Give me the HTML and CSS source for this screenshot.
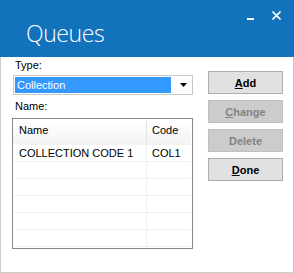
FILE: index.html
```html
<!DOCTYPE html>
<html lang="en">
<head>
    <meta charset="UTF-8">
    <title>Queues</title>
    <link rel="stylesheet" href="styles.css">
</head>
<body>
    <div class="window">
        <div class="titlebar">
            <span class="title">Queues</span>
            <div class="controls">
                <span class="minimize"></span>
                <svg class="close" width="9" height="9" viewBox="0 0 9 9">
                    <path d="M0.5 0.5 L8.5 8.5 M8.5 0.5 L0.5 8.5" stroke="#fff" stroke-width="1.6"/>
                </svg>
            </div>
        </div>
        <div class="content">
            <div class="left">
                <label class="label">Type:</label>
                <div class="combo">
                    <div class="combo-value">Collection</div>
                    <svg class="combo-arrow" width="7" height="4" viewBox="0 0 7 4">
                        <path d="M0 0 H7 L3.5 4 Z" fill="#000"/>
                    </svg>
                </div>
                <label class="label name-label">Name:</label>
                <div class="list">
                    <div class="row header">
                        <div class="cell name">Name</div>
                        <div class="cell code">Code</div>
                    </div>
                    <div class="row">
                        <div class="cell name">COLLECTION CODE 1</div>
                        <div class="cell code">COL1</div>
                    </div>
                    <div class="row"><div class="cell name"></div><div class="cell code"></div></div>
                    <div class="row"><div class="cell name"></div><div class="cell code"></div></div>
                    <div class="row"><div class="cell name"></div><div class="cell code"></div></div>
                    <div class="row"><div class="cell name"></div><div class="cell code"></div></div>
                    <div class="row"><div class="cell name"></div><div class="cell code"></div></div>
                </div>
            </div>
            <div class="buttons">
                <button class="button"><u>A</u>dd</button>
                <button class="button" disabled><u>C</u>hange</button>
                <button class="button" disabled>Delete</button>
                <button class="button"><u>D</u>one</button>
            </div>
        </div>
    </div>
</body>
</html>
```

FILE: styles.css
```css
body {
    margin: 0;
    font-family: 'Liberation Sans', Arial, sans-serif;
    font-size: 11px;
    background-color: #ffffff;
}
.window {
    width: 294px;
    height: 273px;
    box-sizing: border-box;
    border: 1px solid #cccccc;
    border-top: none;
    background-color: #ffffff;
}
.titlebar {
    height: 57px;
    margin: 0 -1px;
    background-color: #1372bc;
    display: flex;
    justify-content: space-between;
}
.title {
    color: #ffffff;
    font-family: 'Open Sans', sans-serif;
    font-weight: 300;
    font-size: 23px;
    letter-spacing: -0.4px;
    padding: 17px 0 0 26px;
}
.controls {
    display: flex;
    align-items: flex-start;
    padding: 11px 13px 0 0;
}
.minimize {
    width: 7px;
    height: 2px;
    background-color: #ffffff;
    margin: 7px 18px 0 0;
}
.content {
    display: flex;
    padding: 0 0 0 11px;
}
.left {
    width: 181px;
}
.label {
    display: block;
    line-height: 13px;
    padding: 2px 0 0 3px;
    color: #000000;
}
.combo {
    margin: 3px 0 0 1px;
    height: 20px;
    box-sizing: border-box;
    border: 1px solid #c8c8c8;
    display: flex;
    align-items: center;
    padding: 1px;
}
.combo-value {
    width: 156px;
    height: 16px;
    line-height: 16px;
    background-color: #3399ff;
    color: #ffffff;
    padding-left: 2px;
    box-sizing: border-box;
}
.combo-arrow {
    margin-left: 9px;
}
.name-label {
    padding-top: 5px;
}
.list {
    margin-top: 5px;
    height: 131px;
    box-sizing: border-box;
    border: 1px solid #828790;
    overflow: hidden;
}
.row {
    display: flex;
    height: 17px;
    box-sizing: border-box;
    border-bottom: 1px solid #f0f0f0;
    margin-right: 1px;
}
.header {
    height: 26px;
    border-bottom: none;
    background: linear-gradient(#ffffff, #f3f3f3);
}
.cell {
    line-height: 16px;
    padding-left: 6px;
    white-space: nowrap;
}
.cell.name {
    width: 127px;
    border-right: 1px solid #f0f0f0;
}
.cell.code {
    flex: 1;
    padding-left: 5px;
}
.header .cell {
    height: 26px;
    line-height: 22px;
    border-right-color: #e5e5e5;
}
.buttons {
    display: flex;
    flex-direction: column;
    gap: 6px;
    padding: 14px 0 0 15px;
}
.button {
    width: 75px;
    height: 23px;
    background-color: #e1e1e1;
    border: 1px solid #adadad;
    font-family: 'Liberation Sans', Arial, sans-serif;
    font-size: 11px;
    font-weight: bold;
    color: #000000;
    padding: 0;
}
.button:disabled {
    background-color: #cccccc;
    border-color: #bfbfbf;
    color: #838383;
}
```
